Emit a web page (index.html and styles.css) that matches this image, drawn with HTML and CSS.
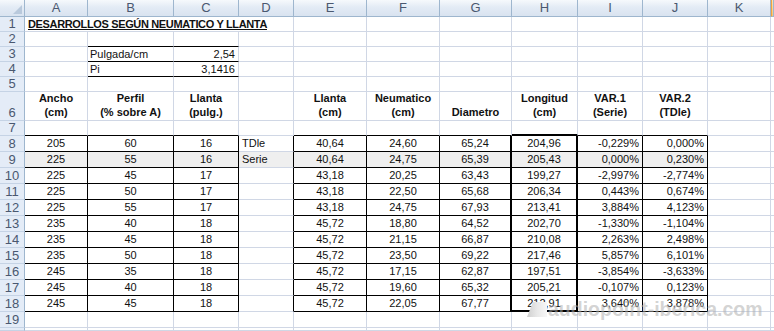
FILE: index.html
```html
<!DOCTYPE html>
<html lang="es">
<head>
<meta charset="utf-8">
<title>Desarrollos</title>
<link rel="stylesheet" href="styles.css">
</head>
<body>
<div class="sheet">
  <div class="row h17">
    <div class="hd corner"><svg width="9" height="9" viewBox="0 0 9 9"><polygon points="9,0 9,9 0,9" fill="#b9c9dc"/></svg></div>
    <div class="hd">A</div><div class="hd">B</div><div class="hd">C</div><div class="hd">D</div><div class="hd">E</div><div class="hd">F</div><div class="hd">G</div><div class="hd">H</div><div class="hd">I</div><div class="hd">J</div><div class="hd">K</div><div class="hd sel"></div>
  </div>
  <div class="row h15">
    <div class="rh">1</div>
    <div class="title">DESARROLLOS SEGÚN NEUMATICO Y LLANTA</div>
    <div></div><div></div><div></div><div></div><div></div><div></div><div></div><div></div>
  </div>
  <div class="row h15">
    <div class="rh">2</div>
    <div></div><div class="bb"></div><div class="bb"></div><div></div><div></div><div></div><div></div><div></div><div></div><div></div><div></div><div></div>
  </div>
  <div class="row h15">
    <div class="rh">3</div>
    <div></div><div class="bb">Pulgada/cm</div><div class="bb r">2,54</div><div></div><div></div><div></div><div></div><div></div><div></div><div></div><div></div><div></div>
  </div>
  <div class="row h15">
    <div class="rh">4</div>
    <div></div><div class="bb">Pi</div><div class="bb r">3,1416</div><div></div><div></div><div></div><div></div><div></div><div></div><div></div><div></div><div></div>
  </div>
  <div class="row h15">
    <div class="rh">5</div>
    <div></div><div></div><div></div><div></div><div></div><div></div><div></div><div></div><div></div><div></div><div></div><div></div>
  </div>
  <div class="row h29">
    <div class="rh">6</div>
    <div class="lab"><span>Ancho</span><span>(cm)</span></div>
    <div class="lab"><span>Perfil</span><span>(% sobre A)</span></div>
    <div class="lab"><span>Llanta</span><span>(pulg.)</span></div>
    <div></div>
    <div class="lab"><span>Llanta</span><span>(cm)</span></div>
    <div class="lab"><span>Neumatico</span><span>(cm)</span></div>
    <div class="lab"><span>Diametro</span></div>
    <div class="lab"><span>Longitud</span><span>(cm)</span></div>
    <div class="lab"><span>VAR.1</span><span>(Serie)</span></div>
    <div class="lab"><span>VAR.2</span><span>(TDle)</span></div>
    <div></div><div></div>
  </div>
  <div class="row h15">
    <div class="rh">7</div>
    <div class="bb"></div><div class="bb"></div><div class="bb"></div><div></div><div class="bb"></div><div class="bb"></div><div class="bb"></div><div class="bbt"></div><div class="bb"></div><div class="bb"></div><div></div><div></div>
  </div>

  <div class="row h16">
    <div class="rh">8</div>
    <div class="t">205</div><div class="t">60</div><div class="t">16</div><div class="d">TDle</div><div class="t">40,64</div><div class="t">24,60</div><div class="t g">65,24</div><div class="t h">204,96</div><div class="t r">-0,229%</div><div class="t r">0,000%</div><div></div><div></div>
  </div>
  <div class="row h16 grey">
    <div class="rh">9</div>
    <div class="t">225</div><div class="t">55</div><div class="t">16</div><div class="d">Serie</div><div class="t">40,64</div><div class="t">24,75</div><div class="t g">65,39</div><div class="t h">205,43</div><div class="t r">0,000%</div><div class="t r">0,230%</div><div class="nog"></div><div class="nog"></div>
  </div>
  <div class="row h16">
    <div class="rh">10</div>
    <div class="t">225</div><div class="t">45</div><div class="t">17</div><div class="d"></div><div class="t">43,18</div><div class="t">20,25</div><div class="t g">63,43</div><div class="t h">199,27</div><div class="t r">-2,997%</div><div class="t r">-2,774%</div><div></div><div></div>
  </div>
  <div class="row h16">
    <div class="rh">11</div>
    <div class="t">225</div><div class="t">50</div><div class="t">17</div><div class="d"></div><div class="t">43,18</div><div class="t">22,50</div><div class="t g">65,68</div><div class="t h">206,34</div><div class="t r">0,443%</div><div class="t r">0,674%</div><div></div><div></div>
  </div>
  <div class="row h16">
    <div class="rh">12</div>
    <div class="t">225</div><div class="t">55</div><div class="t">17</div><div class="d"></div><div class="t">43,18</div><div class="t">24,75</div><div class="t g">67,93</div><div class="t h">213,41</div><div class="t r">3,884%</div><div class="t r">4,123%</div><div></div><div></div>
  </div>
  <div class="row h16">
    <div class="rh">13</div>
    <div class="t">235</div><div class="t">40</div><div class="t">18</div><div class="d"></div><div class="t">45,72</div><div class="t">18,80</div><div class="t g">64,52</div><div class="t h">202,70</div><div class="t r">-1,330%</div><div class="t r">-1,104%</div><div></div><div></div>
  </div>
  <div class="row h16">
    <div class="rh">14</div>
    <div class="t">235</div><div class="t">45</div><div class="t">18</div><div class="d"></div><div class="t">45,72</div><div class="t">21,15</div><div class="t g">66,87</div><div class="t h">210,08</div><div class="t r">2,263%</div><div class="t r">2,498%</div><div></div><div></div>
  </div>
  <div class="row h16">
    <div class="rh">15</div>
    <div class="t">235</div><div class="t">50</div><div class="t">18</div><div class="d"></div><div class="t">45,72</div><div class="t">23,50</div><div class="t g">69,22</div><div class="t h">217,46</div><div class="t r">5,857%</div><div class="t r">6,101%</div><div></div><div></div>
  </div>
  <div class="row h16">
    <div class="rh">16</div>
    <div class="t">245</div><div class="t">35</div><div class="t">18</div><div class="d"></div><div class="t">45,72</div><div class="t">17,15</div><div class="t g">62,87</div><div class="t h">197,51</div><div class="t r">-3,854%</div><div class="t r">-3,633%</div><div></div><div></div>
  </div>
  <div class="row h16">
    <div class="rh">17</div>
    <div class="t">245</div><div class="t">40</div><div class="t">18</div><div class="d"></div><div class="t">45,72</div><div class="t">19,60</div><div class="t g">65,32</div><div class="t h">205,21</div><div class="t r">-0,107%</div><div class="t r">0,123%</div><div></div><div></div>
  </div>
  <div class="row h16">
    <div class="rh">18</div>
    <div class="t">245</div><div class="t">45</div><div class="t">18</div><div class="d"></div><div class="t">45,72</div><div class="t">22,05</div><div class="t g">67,77</div><div class="t h last">212,91</div><div class="t r">3,640%</div><div class="t r">3,878%</div><div></div><div></div>
  </div>
  <div class="row h16">
    <div class="rh">19</div>
    <div></div><div></div><div></div><div></div><div></div><div></div><div></div><div></div><div></div><div></div><div></div><div></div>
  </div>
  <div class="row h3">
    <div class="rh"></div>
    <div></div><div></div><div></div><div></div><div></div><div></div><div></div><div></div><div></div><div></div><div></div><div></div>
  </div>

  <div class="wm">
    <svg class="logo" width="20" height="15" viewBox="0 0 20 15"><defs><linearGradient id="lg" x1="0" y1="0" x2="1" y2="0"><stop offset="0" stop-color="#cfcfcf"/><stop offset="0.5" stop-color="#e8e8e8"/><stop offset="1" stop-color="#f7f7f7"/></linearGradient></defs><polygon points="6,0 20,0 20,15 0,15" fill="url(#lg)"/></svg>
    <span class="wmtext">audiopoint-iberica.com</span>
  </div>
</div>
</body>
</html>
```
FILE: styles.css
```css
body {
  margin: 0;
  overflow: hidden;
  background: #fff;
  font-family: "Liberation Sans", Arial, sans-serif;
  font-size: 11px;
  color: #111;
}

.sheet {
  position: relative;
  width: 774px;
  height: 331px;
  overflow: hidden;
}

.row {
  display: grid;
  grid-template-columns: 25px 63px 86px 65px 55px 73px 73px 72px 66px 65px 65px 63px 3px;
}

.row > div {
  box-sizing: border-box;
  border-right: 1px solid #d0d7e5;
  border-bottom: 1px solid #d0d7e5;
  white-space: nowrap;
  overflow: hidden;
  padding: 0 2px;
}

.h17 { height: 17px; }
.h15 { height: 15px; line-height: 14px; }
.h29 { height: 29px; }
.h16 { height: 16px; line-height: 15px; }
.h3 { height: 3px; }

.row > .hd {
  background: linear-gradient(#f6f9fc, #e3ebf5 45%, #d9e3f0);
  border-right-color: #9eb6ce;
  border-bottom-color: #9eb6ce;
  color: #4a5870;
  text-align: center;
  font-size: 13px;
  line-height: 16px;
  padding: 0;
}

.row > .corner {
  display: flex;
  align-items: flex-end;
  justify-content: flex-end;
  padding: 0 2px 2px 0;
}

.row > .sel {
  background: linear-gradient(#fbe3b5, #f6c878);
  border-left: 1px solid #f2a33f;
}

.row > .rh {
  background: #e4ecf7;
  border-right-color: #9eb6ce;
  border-bottom-color: #c5d3e5;
  color: #4a5870;
  text-align: center;
  font-size: 13px;
  padding: 0;
}

.h29 > .rh {
  display: flex;
  align-items: flex-end;
  justify-content: center;
  line-height: 14px;
}

.row > .title {
  grid-column: span 4;
  font-weight: bold;
  text-decoration: underline;
  letter-spacing: -0.35px;
  padding-left: 3px;
}

.row > .lab {
  display: flex;
  flex-direction: column;
  justify-content: flex-end;
  align-items: center;
  font-weight: bold;
  line-height: 14px;
  padding-bottom: 1px;
}

.row > .bb { border-bottom-color: #000; }
.row > .bbt { border-bottom: 2px solid #000; }

.row > .t {
  text-align: center;
  border-right-color: #000;
  border-bottom-color: #000;
}

.row > .r { text-align: right; padding-right: 3px; }
.row > .d { border-right-color: #000; padding-left: 3px; }
.row > .g { border-right: 2px solid #000; }
.row > .h { border-right: 2px solid #000; }
.row > .last { border-bottom: 2px solid #000; }

.grey > div:not(.rh):not(.nog) { background: #efefef; }

.wm {
  position: absolute;
  left: 527px;
  top: 299px;
  display: flex;
  align-items: center;
  gap: 1px;
}

.logo {
  display: block;
}

.wmtext {
  font-family: "Liberation Sans", Arial, sans-serif;
  font-weight: bold;
  font-size: 19.5px;
  line-height: 20px;
  color: rgba(175, 175, 175, 0.55);
}
```
